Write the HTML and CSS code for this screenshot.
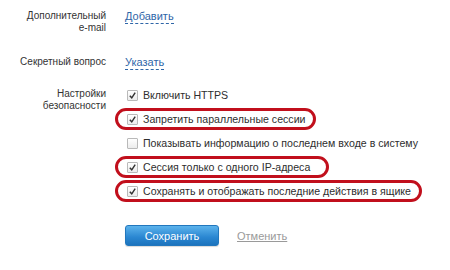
FILE: index.html
```html
<!DOCTYPE html>
<html lang="ru">
<head>
<meta charset="utf-8">
<link rel="stylesheet" href="styles.css">
</head>
<body>
<div class="form">
  <div class="field f-email">
    <div class="label">Дополнительный<br>e-mail</div>
    <div class="value"><a class="dash">Добавить</a></div>
  </div>
  <div class="field f-question">
    <div class="label">Секретный вопрос</div>
    <div class="value"><a class="dash">Указать</a></div>
  </div>
  <div class="field f-security">
    <div class="label label-sec">Настройки<br>безопасности</div>
    <div class="value opts">
      <div class="opt"><span class="cb on"><svg viewBox="0 0 10 10"><path d="M2 5.2 L4.2 7.6 L8 1.8" /></svg></span>Включить HTTPS</div>
      <div class="opt mark"><span class="cb on"><svg viewBox="0 0 10 10"><path d="M2 5.2 L4.2 7.6 L8 1.8" /></svg></span>Запретить параллельные сессии</div>
      <div class="opt"><span class="cb"></span>Показывать информацию о последнем входе в систему</div>
      <div class="opt mark wide"><span class="cb on"><svg viewBox="0 0 10 10"><path d="M2 5.2 L4.2 7.6 L8 1.8" /></svg></span>Сессия только с одного IP-адреса</div>
      <div class="opt mark"><span class="cb on"><svg viewBox="0 0 10 10"><path d="M2 5.2 L4.2 7.6 L8 1.8" /></svg></span>Сохранять и отображать последние действия в ящике</div>
    </div>
  </div>
  <div class="field actions">
    <div class="label"></div>
    <div class="value buttons">
      <button class="save">Сохранить</button>
      <a class="cancel">Отменить</a>
    </div>
  </div>
</div>
</body>
</html>
```
FILE: styles.css
```css
html, body {
  margin: 0;
  padding: 0;
  background: #ffffff;
}
body {
  font-family: "Liberation Sans", Arial, sans-serif;
  color: #333333;
  width: 450px;
  height: 270px;
  overflow: hidden;
}
.form {
  padding: 10px 0 0 8px;
}
.field {
  display: flex;
  align-items: flex-start;
}
.label {
  width: 98px;
  flex: none;
  margin-right: 19px;
  text-align: right;
  font-size: 10px;
  line-height: 12px;
  color: #333333;
}
.value {
  font-size: 11px;
  line-height: 12px;
}
.f-question {
  margin-top: 22px;
}
.f-security {
  margin-top: 16px;
}
.label-sec {
  padding-top: 4px;
}
.dash {
  color: #2f66a8;
  text-decoration: none;
  border-bottom: 1px dashed #2f66a8;
  padding-bottom: 1px;
}
.opts {
  display: flex;
  flex-direction: column;
  align-items: flex-start;
  gap: 2px;
}
.opt {
  display: flex;
  align-items: center;
  height: 16px;
  margin-left: -10px;
  padding: 0 8px 0 9px;
  border: 3px solid transparent;
  border-radius: 12px;
  font-size: 10.6px;
  color: #2e2e2e;
  white-space: nowrap;
}
.opt.mark {
  border-color: #c10f1c;
}
.opt.wide {
  padding-right: 16px;
}
.cb {
  width: 9px;
  height: 9px;
  flex: none;
  margin-right: 5px;
  border: 1px solid #b9b9b9;
  border-radius: 1px;
  background: linear-gradient(#ffffff, #ececec);
  display: flex;
}
.cb svg {
  width: 9px;
  height: 9px;
}
.cb svg path {
  fill: none;
  stroke: #333333;
  stroke-width: 1.6;
}
.actions {
  margin-top: 23px;
}
.buttons {
  display: flex;
  align-items: center;
}
.save {
  width: 94px;
  height: 21px;
  padding: 0;
  border: 1px solid #2277bd;
  border-radius: 3px;
  background: linear-gradient(#5cb3ec, #2a86d1 60%, #1c73bd);
  color: #ffffff;
  font-family: "Liberation Sans", Arial, sans-serif;
  font-size: 11px;
  box-shadow: 0 1px 1px rgba(0, 0, 0, 0.15);
}
.cancel {
  margin-left: 18px;
  font-size: 11px;
  color: #9a9a9a;
  text-decoration: underline;
}
```
